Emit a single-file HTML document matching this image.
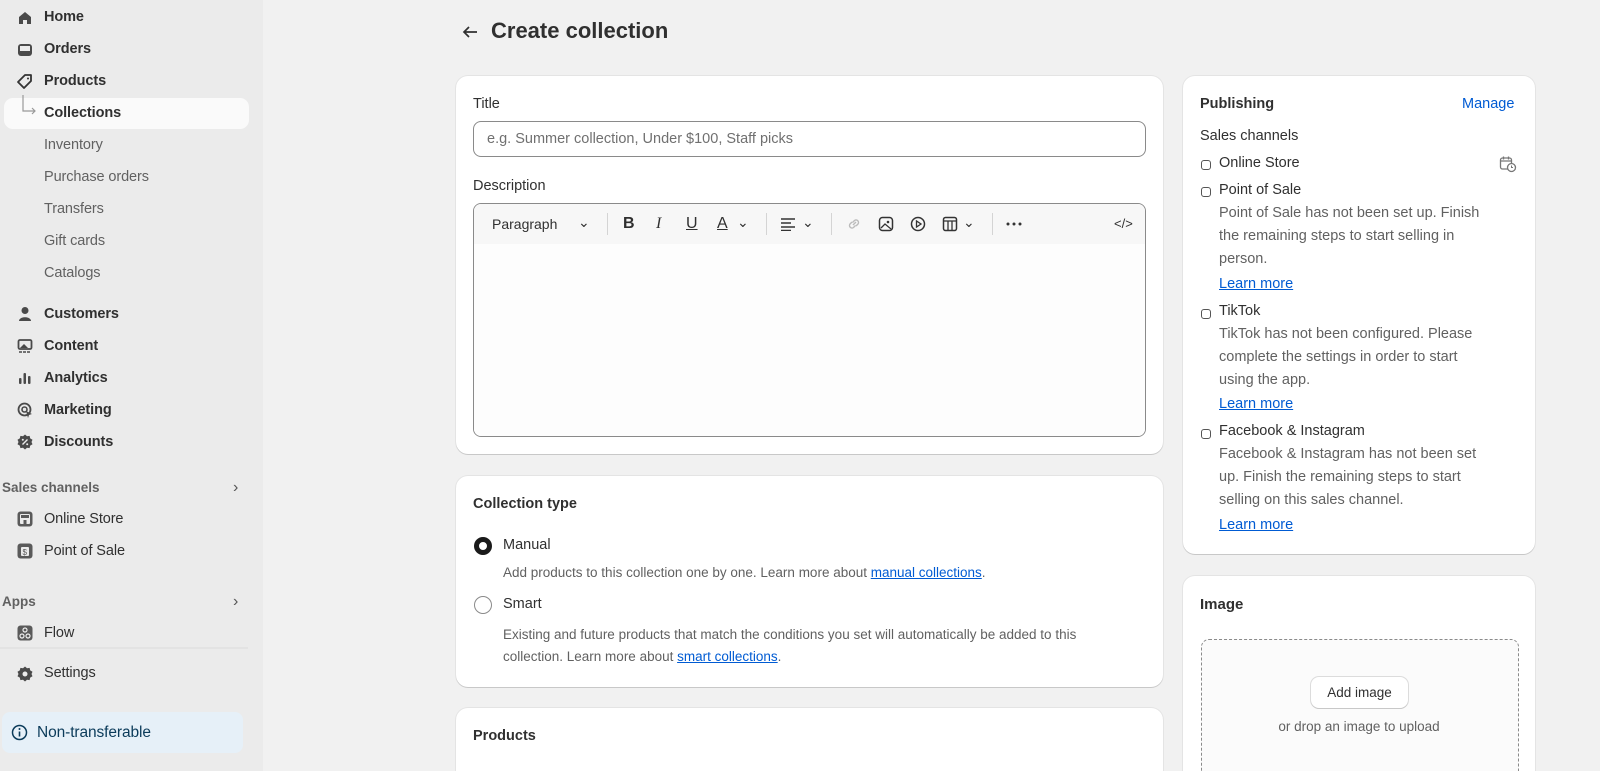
<!DOCTYPE html>
<html><head><meta charset="utf-8"><style>
*{box-sizing:border-box;margin:0;padding:0}
html,body{width:1600px;height:771px;overflow:hidden;background:#f1f1f1}
body{font-family:"Liberation Sans",sans-serif;font-size:14.5px;color:#303030}
#w{position:absolute;left:0;top:0;width:1600px;height:771px;overflow:hidden}
.side{position:absolute;left:0;top:0;width:263px;height:771px;background:#ebebeb}
.ni{position:absolute;left:44px;font-size:14.5px;color:#303030;font-weight:bold;letter-spacing:-0.1px}
.ni.sub{font-weight:normal;color:#616161}
.ic{position:absolute;left:16px;width:18px;height:18px}
.sec{position:absolute;left:2px;font-size:13.5px;color:#616161;font-weight:bold}
.chev{position:absolute;left:233px;color:#555;font-size:16px}
.card{position:absolute;background:#fff;border-radius:12px;box-shadow:0 1px 0 rgba(0,0,0,.12),0 0 0 1px rgba(0,0,0,.05)}
.lbl{position:absolute;font-size:14.5px;color:#303030}
.b{font-weight:bold}
.muted{color:#616161}
a{color:#005bd3}
.rad{position:absolute;width:10px;height:10px;border:1.5px solid #555;border-radius:3px}
.t{position:absolute;line-height:23px}
</style></head><body><div id="w">
<div class="side">
<svg class="ic" style="top:9px" viewBox="0 0 18 18"><path d="M3 8 9 3l6 5v7H11v-4H7v4H3z" fill="#4a4a4a"/></svg>
<div class="ni" style="top:9px">Home</div>
<svg class="ic" style="top:41px" viewBox="0 0 18 18"><rect x="2" y="3" width="14" height="12" rx="3" fill="#4a4a4a"/><rect x="4" y="5" width="10" height="5" fill="#ebebeb"/></svg>
<div class="ni" style="top:41px">Orders</div>
<svg class="ic" style="top:73px" viewBox="0 0 18 18"><path d="M9 2h6v6l-7 7-6-6z" fill="none" stroke="#333" stroke-width="1.8" stroke-linejoin="round"/><circle cx="12" cy="5.5" r="1" fill="#333"/></svg>
<div class="ni" style="top:73px">Products</div>
<div style="position:absolute;left:4px;top:98px;width:245px;height:31px;background:#fafafa;border-radius:9px"></div>
<svg style="position:absolute;left:20px;top:95px" width="20" height="24"><path d="M3 0v16h12M12 13l3 3-3 3" fill="none" stroke="#999" stroke-width="1.2"/></svg>
<div class="ni" style="top:105px">Collections</div>
<div class="ni sub" style="top:137px">Inventory</div>
<div class="ni sub" style="top:169px">Purchase orders</div>
<div class="ni sub" style="top:201px">Transfers</div>
<div class="ni sub" style="top:233px">Gift cards</div>
<div class="ni sub" style="top:265px">Catalogs</div>
<svg class="ic" style="top:305px" viewBox="0 0 18 18"><circle cx="9" cy="5.5" r="3.5" fill="#4a4a4a"/><path d="M3 16c0-5 12-5 12 0z" fill="#4a4a4a"/></svg>
<div class="ni" style="top:306px">Customers</div>
<svg class="ic" style="top:337px" viewBox="0 0 18 18"><rect x="2.5" y="3" width="13" height="9" rx="1.5" fill="none" stroke="#4a4a4a" stroke-width="1.8"/><path d="M4 11l4-4 4 4z" fill="#4a4a4a"/><path d="M3 15h12" stroke="#4a4a4a" stroke-width="1.6" stroke-dasharray="3 1"/></svg>
<div class="ni" style="top:338px">Content</div>
<svg class="ic" style="top:369px" viewBox="0 0 18 18"><rect x="3" y="9" width="2.5" height="6" rx="1" fill="#4a4a4a"/><rect x="7.5" y="4" width="2.5" height="11" rx="1" fill="#4a4a4a"/><rect x="12" y="7" width="2.5" height="8" rx="1" fill="#4a4a4a"/></svg>
<div class="ni" style="top:370px">Analytics</div>
<svg class="ic" style="top:401px" viewBox="0 0 18 18"><circle cx="8.5" cy="8.5" r="6" fill="none" stroke="#4a4a4a" stroke-width="1.8"/><circle cx="8.5" cy="8.5" r="2.5" fill="none" stroke="#4a4a4a" stroke-width="1.6"/><path d="M10 10l6 3-3 1-1 3z" fill="#4a4a4a"/></svg>
<div class="ni" style="top:402px">Marketing</div>
<svg class="ic" style="top:433px" viewBox="0 0 18 18"><path d="M9 1.5l2 1.7 2.6-.3.6 2.5 2.3 1.3-1 2.3 1 2.3-2.3 1.3-.6 2.5-2.6-.3L9 16.5 7 14.8l-2.6.3-.6-2.5-2.3-1.3 1-2.3-1-2.3 2.3-1.3.6-2.5 2.6.3z" fill="#4a4a4a"/><path d="M6.5 11.5l5-5" stroke="#ebebeb" stroke-width="1.4"/><circle cx="6.8" cy="6.8" r="1" fill="#ebebeb"/><circle cx="11.2" cy="11.2" r="1" fill="#ebebeb"/></svg>
<div class="ni" style="top:434px">Discounts</div>
<div class="sec" style="top:480px">Sales channels</div><div class="chev" style="top:479px">›</div>
<svg class="ic" style="top:510px" viewBox="0 0 18 18"><rect x="1.5" y="1.5" width="15" height="15" rx="3" fill="#5a5a5a"/><rect x="4" y="4" width="10" height="10" rx="1" fill="#ebebeb"/><rect x="5" y="5" width="8" height="3" fill="#5a5a5a"/><rect x="7.5" y="10" width="3" height="4" fill="#5a5a5a"/></svg>
<div class="ni" style="top:511px;font-weight:normal">Online Store</div>
<svg class="ic" style="top:542px" viewBox="0 0 18 18"><rect x="1.5" y="1.5" width="15" height="15" rx="3" fill="#5a5a5a"/><rect x="5" y="5" width="8" height="9" rx="1" fill="#ebebeb"/><text x="6.5" y="13" font-size="8" fill="#5a5a5a" font-family="Liberation Sans">$</text></svg>
<div class="ni" style="top:543px;font-weight:normal">Point of Sale</div>
<div class="sec" style="top:594px">Apps</div><div class="chev" style="top:593px">›</div>
<svg class="ic" style="top:624px" viewBox="0 0 18 18"><rect x="1.5" y="1.5" width="15" height="15" rx="3" fill="#5a5a5a"/><circle cx="9" cy="6" r="2" fill="none" stroke="#eee" stroke-width="1.2"/><circle cx="6" cy="12" r="2" fill="none" stroke="#eee" stroke-width="1.2"/><circle cx="12" cy="12" r="2" fill="none" stroke="#eee" stroke-width="1.2"/></svg>
<div class="ni" style="top:625px;font-weight:normal">Flow</div>
<div style="position:absolute;left:0;top:647px;width:248px;height:2px;background:#e3e3e3"></div>
<svg class="ic" style="top:665px" viewBox="0 0 18 18"><path d="M9 1.5l2 1.7 2.6-.3.6 2.5 2.3 1.3-1 2.3 1 2.3-2.3 1.3-.6 2.5-2.6-.3L9 16.5 7 14.8l-2.6.3-.6-2.5-2.3-1.3 1-2.3-1-2.3 2.3-1.3.6-2.5 2.6.3z" fill="#4a4a4a"/><circle cx="9" cy="9" r="2.5" fill="#ebebeb"/></svg>
<div class="ni" style="top:665px;font-weight:normal">Settings</div>
<div style="position:absolute;left:2px;top:712px;width:241px;height:41px;background:#e6f0f8;border-radius:8px"></div>
<svg style="position:absolute;left:11px;top:724px" width="17" height="17" viewBox="0 0 17 17"><circle cx="8.5" cy="8.5" r="7" fill="none" stroke="#0b3b5a" stroke-width="1.5"/><path d="M8.5 7.5v5" stroke="#0b3b5a" stroke-width="1.6"/><circle cx="8.5" cy="5" r="1" fill="#0b3b5a"/></svg>
<div class="ni" style="left:37px;top:724px;font-size:15.5px;font-weight:normal;color:#0b3b5a">Non-transferable</div>
</div>

<svg style="position:absolute;left:461px;top:24px" width="18" height="16" viewBox="0 0 18 16"><path d="M16 8H3M8 3L3 8l5 5" fill="none" stroke="#303030" stroke-width="1.7"/></svg>
<div style="position:absolute;left:491px;top:18px;font-size:22px;font-weight:bold;color:#303030">Create collection</div>

<div class="card" style="left:456px;top:76px;width:707px;height:378px">
<div class="lbl" style="left:17px;top:20px">Title</div>
<div style="position:absolute;left:17px;top:45px;width:673px;height:36px;border:1px solid #8a8a8a;border-radius:8px;padding:9px 13px;color:#707070;font-size:14.5px">e.g. Summer collection, Under $100, Staff picks</div>
<div class="lbl" style="left:17px;top:102px">Description</div>
<div style="position:absolute;left:17px;top:127px;width:673px;height:234px;border:1px solid #8a8a8a;border-radius:8px;overflow:hidden">
<div style="height:40px;background:#f7f7f7;position:relative;font-size:14px;color:#303030">
<span style="position:absolute;left:18px;top:12px">Paragraph</span><span style="position:absolute;left:104px;top:10px">⌄</span>
<div style="position:absolute;left:133px;top:9px;width:1px;height:22px;background:#d4d4d4"></div>
<b style="position:absolute;left:149px;top:11px;font-size:16px">B</b>
<i style="position:absolute;left:182px;top:11px;font-size:16px;font-family:'Liberation Serif'">I</i>
<u style="position:absolute;left:212px;top:11px;font-size:16px">U</u>
<u style="position:absolute;left:243px;top:11px;font-size:16px">A</u><span style="position:absolute;left:263px;top:10px">⌄</span>
<div style="position:absolute;left:292px;top:9px;width:1px;height:22px;background:#d4d4d4"></div>
<svg style="position:absolute;left:306px;top:13px" width="16" height="14"><path d="M1 2h14M1 6h10M1 10h14M1 13.5h10" stroke="#333" stroke-width="1.4"/></svg><span style="position:absolute;left:328px;top:10px">⌄</span>
<div style="position:absolute;left:357px;top:9px;width:1px;height:22px;background:#d4d4d4"></div>
<svg style="position:absolute;left:372px;top:12px" width="16" height="16"><path d="M7 9l3-3M6 6L4 8a2.5 2.5 0 003.5 3.5L9.5 9.5M10 10l2-2a2.5 2.5 0 00-3.5-3.5L6.5 6.5" fill="none" stroke="#bbb" stroke-width="1.4"/></svg>
<svg style="position:absolute;left:404px;top:12px" width="16" height="16"><rect x="1.5" y="1.5" width="13" height="13" rx="3" fill="none" stroke="#333" stroke-width="1.5"/><path d="M3 12l4-4 6 5" fill="none" stroke="#333" stroke-width="1.3"/><circle cx="10" cy="6" r="1.3" fill="#333"/></svg>
<svg style="position:absolute;left:436px;top:12px" width="16" height="16"><circle cx="8" cy="8" r="6.5" fill="none" stroke="#333" stroke-width="1.5"/><path d="M6.5 5v6l4.5-3z" fill="none" stroke="#333" stroke-width="1.3"/></svg>
<svg style="position:absolute;left:468px;top:12px" width="16" height="16"><rect x="1.5" y="1.5" width="13" height="13" rx="2" fill="none" stroke="#333" stroke-width="1.5"/><path d="M1.5 5h13M6 5v10M10 5v10" stroke="#333" stroke-width="1.3"/></svg><span style="position:absolute;left:489px;top:10px">⌄</span>
<div style="position:absolute;left:518px;top:9px;width:1px;height:22px;background:#d4d4d4"></div>
<svg style="position:absolute;left:532px;top:18px" width="18" height="4"><circle cx="2" cy="2" r="1.5" fill="#333"/><circle cx="8" cy="2" r="1.5" fill="#333"/><circle cx="14" cy="2" r="1.5" fill="#333"/></svg>
<span style="position:absolute;left:640px;top:12px;font-size:13px">&lt;/&gt;</span>
</div>
<div style="background:#fdfdfd;height:194px"></div>
</div>
</div>

<div class="card" style="left:456px;top:476px;width:707px;height:211px">
<div class="lbl b" style="left:17px;top:20px">Collection type</div>
<div style="position:absolute;left:18px;top:61px;width:18px;height:18px;border-radius:50%;border:5px solid #1a1a1a"></div>
<div class="lbl" style="left:47px;top:61px">Manual</div>
<div class="lbl muted" style="left:47px;top:89px;font-size:13.5px">Add products to this collection one by one. Learn more about <a href="#">manual collections</a>.</div>
<div style="position:absolute;left:18px;top:120px;width:18px;height:18px;border-radius:50%;border:1.5px solid #8a8a8a"></div>
<div class="lbl" style="left:47px;top:120px">Smart</div>
<div class="lbl muted" style="left:47px;top:148px;font-size:13.5px;line-height:22px">Existing and future products that match the conditions you set will automatically be added to this<br>collection. Learn more about <a href="#">smart collections</a>.</div>
</div>

<div class="card" style="left:456px;top:708px;width:707px;height:63px;border-radius:12px 12px 0 0">
<div class="lbl b" style="left:17px;top:20px">Products</div>
</div>

<div class="card" style="left:1183px;top:76px;width:352px;height:478px">
<div class="lbl b" style="left:17px;top:20px">Publishing</div>
<div class="lbl" style="left:279px;top:20px;color:#005bd3">Manage</div>
<div class="lbl" style="left:17px;top:52px">Sales channels</div>
<div class="rad" style="left:18px;top:84px"></div><div class="t" style="left:36px;top:76px">Online Store</div>
<svg style="position:absolute;left:316px;top:79px" width="18" height="18"><rect x="1.5" y="3" width="11" height="11" rx="2" fill="none" stroke="#777" stroke-width="1.3"/><path d="M1.5 6h11M4.5 1.5v3M9.5 1.5v3" stroke="#777" stroke-width="1.3"/><circle cx="12.5" cy="12.5" r="4" fill="#fff" stroke="#777" stroke-width="1.3"/><path d="M12.5 10.5v2h1.5" stroke="#777" fill="none"/></svg>
<div class="rad" style="left:18px;top:111px"></div><div class="t" style="left:36px;top:103px">Point of Sale</div>
<div class="t muted" style="left:36px;top:126px">Point of Sale has not been set up. Finish<br>the remaining steps to start selling in<br>person.</div>
<div class="t" style="left:36px;top:197px"><a href="#">Learn more</a></div>
<div class="rad" style="left:18px;top:233px"></div><div class="t" style="left:36px;top:224px">TikTok</div>
<div class="t muted" style="left:36px;top:247px">TikTok has not been configured. Please<br>complete the settings in order to start<br>using the app.</div>
<div class="t" style="left:36px;top:317px"><a href="#">Learn more</a></div>
<div class="rad" style="left:18px;top:353px"></div><div class="t" style="left:36px;top:344px">Facebook &amp; Instagram</div>
<div class="t muted" style="left:36px;top:367px">Facebook &amp; Instagram has not been set<br>up. Finish the remaining steps to start<br>selling on this sales channel.</div>
<div class="t" style="left:36px;top:438px"><a href="#">Learn more</a></div>
</div>

<div class="card" style="left:1183px;top:576px;width:352px;height:195px;border-radius:12px 12px 0 0">
<div class="lbl b" style="left:17px;top:20px;font-size:15px">Image</div>
<div style="position:absolute;left:18px;top:63px;width:318px;height:132px;border:1px dashed #8a8a8a;border-bottom:none;border-radius:8px 8px 0 0;background:#fbfbfb"></div>
<div style="position:absolute;left:128px;top:101px;width:97px;height:31px;border-radius:8px;background:#fff;box-shadow:0 1px 0 #c8c8c8,0 0 0 1px #dcdcdc;text-align:center;line-height:31px;font-size:13.5px;color:#303030">Add image</div>
<div class="lbl muted" style="left:0;width:352px;text-align:center;top:143px;font-size:13.5px">or drop an image to upload</div>
</div>
</div></body></html>
